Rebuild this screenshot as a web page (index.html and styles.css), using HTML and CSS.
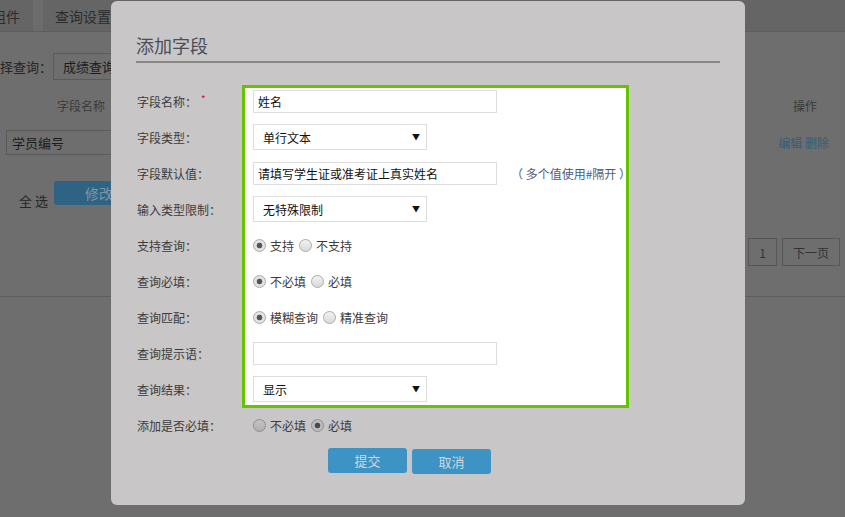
FILE: index.html
```html
<!DOCTYPE html>
<html lang="zh-CN">
<head>
    <meta charset="UTF-8">
    <meta name="viewport" content="width=device-width, initial-scale=1.0">
    <title>查询设置 - 添加字段</title>
    <link rel="stylesheet" href="styles.css">
</head>
<body>
    <div class="page">
        <div class="tabs">
            <div class="tab tab-first">组件</div>
            <div class="tab">查询设置</div>
        </div>
        <div class="query-row">
            <span class="query-label with-colon">选择查询</span>
            <div class="fake-select">成绩查询</div>
        </div>
        <div class="table-head">
            <span class="th-name">字段名称</span>
            <span class="th-ops">操作</span>
        </div>
        <div class="table-row">
            <div class="cell-box">学员编号</div>
            <span class="ops"><a>编辑</a> <a>删除</a></span>
        </div>
        <div class="batch">
            <span class="check-all">全 选</span>
            <button class="btn-dim">修改</button>
        </div>
        <div class="pager">
            <span class="page-btn page-num">1</span>
            <span class="page-btn">下一页</span>
        </div>
    </div>

    <div class="dialog">
        <h2 class="dialog-title">添加字段</h2>
        <form class="field-form">
            <div class="form-body">
                <div class="labels">
                    <div class="f-label"><span class="with-colon">字段名称</span><i class="req">*</i></div>
                    <div class="f-label"><span class="with-colon">字段类型</span></div>
                    <div class="f-label"><span class="with-colon">字段默认值</span></div>
                    <div class="f-label"><span class="with-colon">输入类型限制</span></div>
                    <div class="f-label"><span class="with-colon">支持查询</span></div>
                    <div class="f-label"><span class="with-colon">查询必填</span></div>
                    <div class="f-label"><span class="with-colon">查询匹配</span></div>
                    <div class="f-label"><span class="with-colon">查询提示语</span></div>
                    <div class="f-label"><span class="with-colon">查询结果</span></div>
                    <div class="f-label"><span class="with-colon">添加是否必填</span></div>
                </div>
                <div class="controls">
                    <div class="highlight">
                        <div class="ctrl-rows">
                            <div class="ctrl-row"><input class="txt" type="text" value="姓名"></div>
                            <div class="ctrl-row">
                                <span class="select-wrap"><select><option>单行文本</option></select></span>
                            </div>
                            <div class="ctrl-row">
                                <input class="txt" type="text" value="请填写学生证或准考证上真实姓名">
                                <span class="hint">（ 多个值使用#隔开 ）</span>
                            </div>
                            <div class="ctrl-row">
                                <span class="select-wrap"><select><option>无特殊限制</option></select></span>
                            </div>
                            <div class="ctrl-row">
                                <label class="radio"><input type="radio" name="q1" checked>支持</label>
                                <label class="radio"><input type="radio" name="q1">不支持</label>
                            </div>
                            <div class="ctrl-row">
                                <label class="radio"><input type="radio" name="q2" checked>不必填</label>
                                <label class="radio"><input type="radio" name="q2">必填</label>
                            </div>
                            <div class="ctrl-row">
                                <label class="radio"><input type="radio" name="q3" checked>模糊查询</label>
                                <label class="radio"><input type="radio" name="q3">精准查询</label>
                            </div>
                            <div class="ctrl-row"><input class="txt" type="text" value=""></div>
                            <div class="ctrl-row">
                                <span class="select-wrap"><select><option>显示</option></select></span>
                            </div>
                        </div>
                    </div>
                    <div class="ctrl-row ctrl-last">
                        <label class="radio radio-dim"><input type="radio" name="q4">不必填</label>
                        <label class="radio radio-dim"><input type="radio" name="q4" checked>必填</label>
                    </div>
                </div>
            </div>
            <div class="dialog-foot">
                <button type="button" class="btn">提交</button>
                <button type="button" class="btn btn-cancel">取消</button>
            </div>
        </form>
    </div>
</body>
</html>
```

FILE: styles.css
```css
body {
    margin: 0;
    padding: 0;
    width: 845px;
    height: 517px;
    overflow: hidden;
    background-color: #6e6e6e;
    font-family: "Noto Sans CJK SC", "Noto Sans", sans-serif;
    font-size: 12px;
    color: #3b3b3b;
}
/* centred full-width colon, as the original font draws it */
.with-colon::after {
    content: "：";
    font-family: "Noto Sans CJK TC", sans-serif;
}

/* dimmed page behind the dialog */
.page {
    width: 845px;
}
.tabs {
    display: flex;
    height: 31px;
    background-color: #656565;
    border-bottom: 1px solid #5e5e5e;
}
.tab {
    display: flex;
    align-items: center;
    padding: 0 12px;
    font-size: 14px;
    color: #2c2c2c;
    white-space: nowrap;
}
.tab-first {
    margin-left: -8px;
    padding: 0 13px 0 0;
    border-right: 10px solid #6c6c6c;
}
.query-row {
    display: flex;
    align-items: center;
    margin-top: 21px;
    height: 27px;
}
.query-label {
    margin-left: -13px;
    font-size: 13px;
    color: #262626;
    width: 66px;
    white-space: nowrap;
}
.fake-select {
    width: 160px;
    height: 25px;
    border: 1px solid #5a5a5a;
    font-size: 13px;
    color: #1c1c1c;
    display: flex;
    align-items: center;
    padding-left: 9px;
}
.table-head {
    display: flex;
    align-items: center;
    height: 26px;
    margin-top: 12px;
    padding: 0 28px 0 57px;
}
.th-ops {
    margin-left: auto;
}
.table-row {
    display: flex;
    align-items: center;
    height: 25px;
    margin-top: 12px;
    padding: 0 16px 0 6px;
}
.cell-box {
    width: 150px;
    height: 23px;
    border: 1px solid #5a5a5a;
    font-size: 13px;
    color: #1c1c1c;
    display: flex;
    align-items: center;
    padding-left: 5px;
}
.ops {
    margin-left: auto;
    color: #345d7b;
}
.batch {
    display: flex;
    align-items: flex-start;
    margin-top: 26px;
    height: 24px;
}
.check-all {
    margin: 10px 0 0 19px;
    font-size: 13px;
    color: #262626;
}
.btn-dim {
    margin-left: 6px;
    width: 90px;
    height: 24px;
    border: none;
    border-radius: 3px;
    background-color: #2f6384;
    color: #7d97aa;
    font-family: inherit;
    font-size: 14px;
}
.pager {
    display: flex;
    justify-content: flex-end;
    gap: 5px;
    margin-top: 33px;
    padding-right: 5px;
    padding-bottom: 30px;
    border-bottom: 1px solid #5e5e5e;
}
.page-btn {
    height: 26px;
    padding: 0 10px;
    border: 1px solid #575757;
    display: flex;
    align-items: center;
    color: #333;
}
.page-num {
    width: 7px;
    justify-content: center;
}

/* dialog */
.dialog {
    position: absolute;
    left: 111px;
    top: 1px;
    width: 584px;
    height: 472px;
    padding: 32px 25px 0 25px;
    background-color: #c8c6c7;
    border-radius: 6px;
}
.dialog-title {
    margin: 0;
    height: 24px;
    line-height: 24px;
    padding-bottom: 4px;
    font-size: 18px;
    font-weight: normal;
    color: #4b4f58;
    border-bottom: 2px solid #888;
}
.form-body {
    display: flex;
    margin-top: 20px;
}
.labels {
    width: 105px;
    padding-left: 1px;
}
.f-label {
    height: 36px;
    display: flex;
    align-items: center;
    color: #3c3c3c;
    white-space: nowrap;
}
.req {
    font-style: normal;
    color: #c8143c;
    font-size: 10px;
    margin: -6px 0 0 4px;
}
.highlight {
    width: 373px;
    height: 317px;
    margin-top: 2px;
    padding-left: 8px;
    border: 3px solid #66c300;
    background-color: #fff;
}
.ctrl-rows {
    margin-top: -5px;
}
.ctrl-row {
    height: 36px;
    display: flex;
    align-items: center;
}
.ctrl-last {
    margin-top: -1px;
    padding-left: 11px;
}
.txt {
    box-sizing: border-box;
    flex-shrink: 0;
    width: 244px;
    height: 23px;
    margin: 0;
    padding: 0 4px;
    border: 1px solid #ddd;
    font-family: inherit;
    font-size: 12px;
    color: #111;
    outline: none;
}
.hint {
    margin-left: 14px;
    color: #4d5b7c;
    white-space: nowrap;
}
.select-wrap {
    position: relative;
    display: inline-block;
}
.select-wrap::after {
    content: "▼";
    position: absolute;
    right: 7px;
    top: 7px;
    font-size: 8px;
    color: #111;
    pointer-events: none;
}
select {
    appearance: none;
    -webkit-appearance: none;
    box-sizing: border-box;
    width: 174px;
    height: 26px;
    margin: 0;
    padding: 0 9px;
    border: 1px solid #ddd;
    border-radius: 0;
    background-color: #fff;
    font-family: inherit;
    font-size: 12px;
    color: #111;
    outline: none;
}
.radio {
    display: inline-flex;
    align-items: center;
    gap: 4px;
    margin-right: 5px;
    color: #3c3c3c;
}
.radio input {
    appearance: none;
    -webkit-appearance: none;
    width: 13px;
    height: 13px;
    margin: 0;
    border: 1px solid #aaa;
    border-radius: 50%;
    background: linear-gradient(#f2f2f2, #d9d9d9);
}
.radio input:checked {
    background: radial-gradient(circle, #555 0, #555 2.5px, #e3e3e3 3.2px);
}
.radio-dim input {
    border-color: #8e8e8e;
    background: linear-gradient(#c4c4c4, #b0b0b0);
}
.radio-dim input:checked {
    background: radial-gradient(circle, #4a4a4a 0, #4a4a4a 2.5px, #bcbcbc 3.2px);
}
.dialog-foot {
    display: flex;
    gap: 5px;
    margin-top: 5px;
    padding-left: 192px;
}
.btn {
    width: 79px;
    height: 25px;
    border: none;
    border-radius: 3px;
    background-color: #3c93c4;
    color: #d2d8dd;
    font-family: inherit;
    font-size: 13px;
}
.btn-cancel {
    margin-top: 1px;
}
```
